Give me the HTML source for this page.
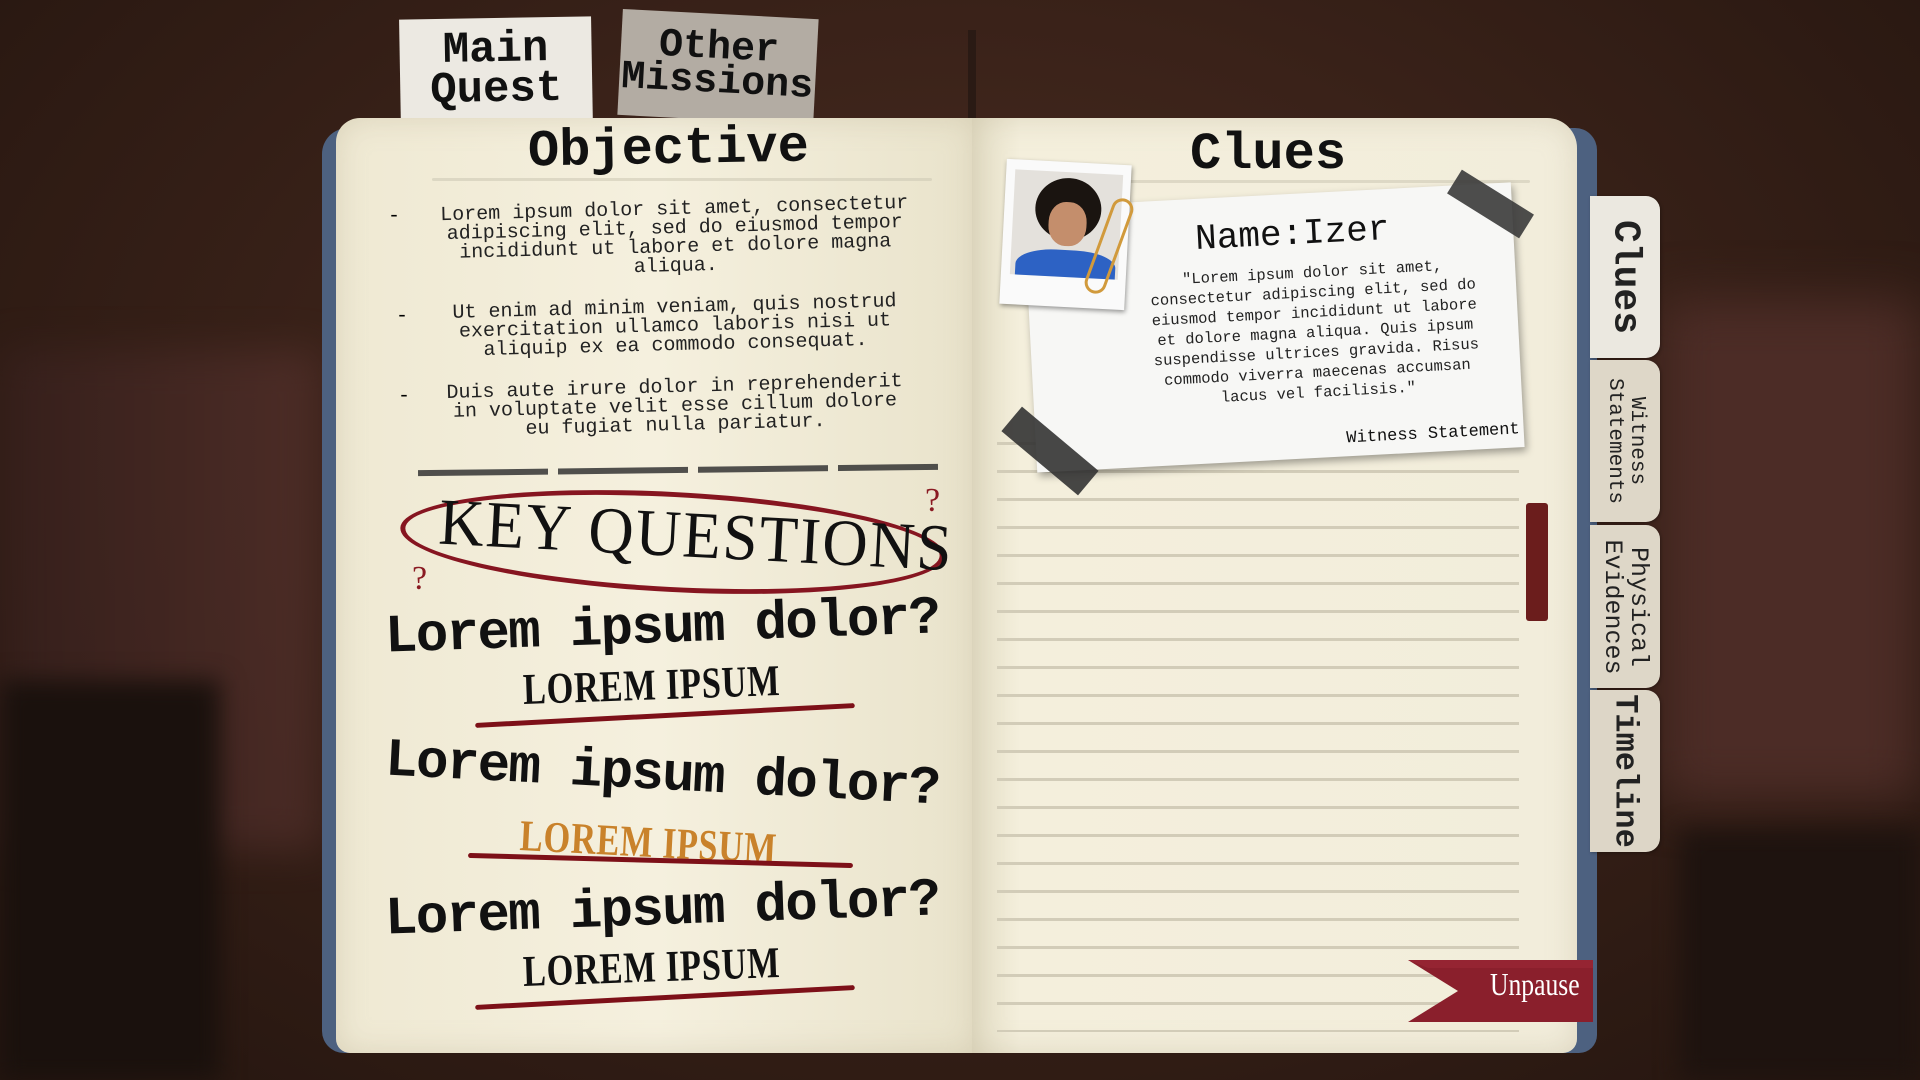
<!DOCTYPE html>
<html><head><meta charset="utf-8"><style>
*{margin:0;padding:0;box-sizing:border-box}
body{width:1920px;height:1080px;overflow:hidden;position:relative;font-family:"Liberation Mono",monospace;
background:radial-gradient(ellipse at 50% 40%,#4a2c22 0%,#3a2219 45%,#24150f 100%);}
.abs{position:absolute}
.bgl{left:0;top:350px;width:320px;height:500px;background:linear-gradient(90deg,#3a2220,#5a3430);opacity:.6;filter:blur(20px)}
.bgb{left:0;top:680px;width:220px;height:400px;background:#1a110d;filter:blur(12px)}
.bgr{left:1660px;top:300px;width:260px;height:500px;background:#4c2c26;filter:blur(25px)}
.bgbr{left:1680px;top:830px;width:240px;height:250px;background:#1e130f;filter:blur(12px)}
.cover{left:322px;top:128px;width:1275px;height:925px;background:#4d6180;border-radius:26px 22px 18px 22px}
.page{background:#f3eedb;box-shadow:inset 0 0 30px rgba(180,170,140,.35)}
.lp{left:336px;top:118px;width:640px;height:935px;border-radius:24px 0 0 14px;background:linear-gradient(90deg,#efe9d3 0%,#f5f0de 50%,#e9e3cb 100%)}
.rp{left:972px;top:118px;width:605px;height:935px;border-radius:0 30px 14px 0;background:linear-gradient(90deg,#e4dec6 0%,#f4efdc 8%,#f2eddb 100%)}
.tab{background:#ece9e2;text-align:center;font-size:44px;line-height:40px;color:#111;font-weight:bold}
.line{height:3px;background:#cfc9b6;border-radius:2px}
.obj{font-size:20px;line-height:19px;text-align:center;color:#222;width:530px;white-space:nowrap}
.q{font-size:54px;color:#111;letter-spacing:-1.6px;white-space:nowrap;font-weight:bold}
.a{font-family:"Liberation Serif",serif;font-size:44px;color:#111;transform:scaleX(.78);transform-origin:left;white-space:nowrap;letter-spacing:1px;font-weight:bold}
.ul{height:5px;background:#7d1018;border-radius:3px}
.stab{left:1590px;width:70px;background:#e6e1d4;border-radius:0 14px 14px 0;box-shadow:1px 1px 3px rgba(0,0,0,.3)}
.vt{position:absolute;left:50%;top:50%;transform:translate(-50%,-50%) rotate(90deg);white-space:nowrap;color:#222;text-align:center}
</style></head><body>
<div class="abs bgl"></div><div class="abs bgb"></div><div class="abs bgr"></div><div class="abs bgbr"></div>
<div class="abs" style="left:968px;top:30px;width:8px;height:100px;background:#2a1a14"></div>

<div class="abs tab" style="left:400px;top:18px;width:192px;height:110px;padding-top:12px;transform:rotate(-1deg)">Main<br>Quest</div>
<div class="abs tab" style="left:620px;top:14px;width:196px;height:106px;padding-top:18px;background:#b3aca3;font-size:40px;line-height:34px;transform:rotate(3deg)">Other<br>Missions</div>

<div class="abs cover"></div>
<div class="abs page lp"></div>
<div class="abs page rp"></div>

<!-- left page -->
<div class="abs" style="left:528px;top:120px;font-size:52px;font-weight:bold;color:#111;transform:rotate(-1deg)">Objective</div>
<div class="abs line" style="left:432px;top:178px;width:500px;opacity:.6"></div>
<div class="abs" style="left:388px;top:205px;font-size:20px">-</div>
<div class="abs obj" style="left:410px;top:200px;transform:rotate(-1.5deg)">Lorem ipsum dolor sit amet, consectetur<br>adipiscing elit, sed do eiusmod tempor<br>incididunt ut labore et dolore magna<br>aliqua.</div>
<div class="abs" style="left:396px;top:305px;font-size:20px">-</div>
<div class="abs obj" style="left:410px;top:298px;transform:rotate(-1.5deg)">Ut enim ad minim veniam, quis nostrud<br>exercitation ullamco laboris nisi ut<br>aliquip ex ea commodo consequat.</div>
<div class="abs" style="left:398px;top:385px;font-size:20px">-</div>
<div class="abs obj" style="left:410px;top:378px;transform:rotate(-1.5deg)">Duis aute irure dolor in reprehenderit<br>in voluptate velit esse cillum dolore<br>eu fugiat nulla pariatur.</div>
<div class="abs" style="left:418px;top:467px;width:520px;height:6px;background:repeating-linear-gradient(90deg,#333 0 130px,transparent 130px 140px);transform:rotate(-.7deg);opacity:.85"></div>

<div class="abs" style="left:400px;top:492px;width:545px;height:100px;border:5px solid #861520;border-radius:50%;transform:rotate(3deg)"></div>
<div class="abs" style="left:425px;top:498px;font-family:'Liberation Serif',serif;font-size:66px;color:#111;transform:rotate(3deg) scaleX(.95);white-space:nowrap;letter-spacing:2px">KEY QUESTIONS</div>
<div class="abs" style="left:925px;top:482px;color:#8a1a22;font-size:34px;font-family:'Liberation Serif',serif">?</div>
<div class="abs" style="left:412px;top:560px;color:#8a1a22;font-size:34px;font-family:'Liberation Serif',serif">?</div>

<div class="abs q" style="left:385px;top:598px;transform:rotate(-2deg)">Lorem ipsum dolor?</div>
<div class="abs a" style="left:523px;top:664px;transform:rotate(-2deg) scaleX(.78)">LOREM IPSUM</div>
<div class="abs ul" style="left:475px;top:713px;width:380px;transform:rotate(-3deg)"></div>
<div class="abs q" style="left:385px;top:745px;transform:rotate(3deg)">Lorem ipsum dolor?</div>
<div class="abs a" style="left:520px;top:810px;color:#c9822b;transform:rotate(3deg) scaleX(.78)">LOREM IPSUM</div>
<div class="abs ul" style="left:468px;top:858px;width:385px;transform:rotate(1.5deg)"></div>
<div class="abs q" style="left:385px;top:880px;transform:rotate(-2deg)">Lorem ipsum dolor?</div>
<div class="abs a" style="left:523px;top:946px;transform:rotate(-2deg) scaleX(.78)">LOREM IPSUM</div>
<div class="abs ul" style="left:475px;top:995px;width:380px;transform:rotate(-3deg)"></div>

<!-- right page lines -->
<div class="abs" style="left:997px;top:442px;width:522px;height:590px;background:repeating-linear-gradient(180deg,#d2ccb8 0 3px,transparent 3px 28px)"></div>

<div class="abs" style="left:1190px;top:125px;font-size:52px;font-weight:bold;color:#111">Clues</div>
<div class="abs line" style="left:1010px;top:180px;width:520px;opacity:.6"></div>

<!-- note -->
<div class="abs" style="left:1030px;top:195px;width:488px;height:265px;background:#f7f7f5;transform:rotate(-3deg);box-shadow:2px 4px 8px rgba(0,0,0,.35)">
  <div style="position:absolute;left:170px;top:20px;font-size:36px;color:#111">Name:Izer</div>
  <div style="position:absolute;left:100px;top:70px;width:370px;font-size:15.5px;line-height:20px;text-align:center;color:#222;white-space:nowrap">"Lorem ipsum dolor sit amet,<br>consectetur adipiscing elit, sed do<br>eiusmod tempor incididunt ut labore<br>et dolore magna aliqua. Quis ipsum<br>suspendisse ultrices gravida. Risus<br>commodo viverra maecenas accumsan<br>lacus vel facilisis."</div>
  <div style="position:absolute;right:4px;bottom:8px;font-size:17px;color:#111">Witness Statement</div>
</div>
<div class="abs" style="left:1448px;top:190px;width:85px;height:28px;background:#3a3a3a;transform:rotate(32deg);opacity:.9"></div>
<div class="abs" style="left:1000px;top:435px;width:100px;height:32px;background:#333;transform:rotate(40deg);opacity:.9"></div>
<!-- photo -->
<div class="abs" style="left:1003px;top:162px;width:125px;height:145px;background:#fafafa;transform:rotate(3deg);box-shadow:1px 2px 5px rgba(0,0,0,.4)">
  <div style="position:absolute;left:9px;top:10px;width:108px;height:105px;background:#e4e1dc;overflow:hidden">
    <div style="position:absolute;left:22px;top:6px;width:66px;height:62px;background:#1a1410;border-radius:50%"></div>
    <div style="position:absolute;left:36px;top:30px;width:38px;height:44px;background:#c48e6c;border-radius:45%"></div>
    <div style="position:absolute;left:5px;top:78px;width:100px;height:40px;background:#2d62c4;border-radius:40% 40% 0 0"></div>
  </div>
</div>
<div class="abs" style="left:1098px;top:196px;width:22px;height:100px;border:3px solid #d19a3c;border-radius:12px;transform:rotate(20deg)"></div>

<!-- bookmark -->
<div class="abs" style="left:1526px;top:503px;width:22px;height:118px;background:#6b1d1c;border-radius:3px"></div>

<!-- side tabs -->
<div class="abs stab" style="top:196px;height:162px;background:#ebe8e0"><div class="vt" style="font-size:38px;font-weight:bold">Clues</div></div>
<div class="abs stab" style="top:360px;height:162px;background:#ded7c8"><div class="vt" style="font-size:21px;line-height:22px">Witness<br>Statements</div></div>
<div class="abs stab" style="top:525px;height:163px;background:#ded7c8"><div class="vt" style="font-size:25px;line-height:26px">Physical<br>Evidences</div></div>
<div class="abs stab" style="top:690px;height:162px;background:#ddd6c7"><div class="vt" style="font-size:32px;font-weight:bold">Timeline</div></div>

<!-- unpause -->
<svg class="abs" style="left:1408px;top:958px" width="185" height="66"><polygon points="0,2 185,2 185,64 0,64 50,33" fill="#8a1f2c"/><polygon points="0,2 185,2 185,10 20,10" fill="#a02a38" opacity=".5"/></svg>
<div class="abs" style="left:1490px;top:966px;font-family:'Liberation Serif',serif;font-size:32px;color:#fff;transform:scaleX(.8);transform-origin:left">Unpause</div>
</body></html>
